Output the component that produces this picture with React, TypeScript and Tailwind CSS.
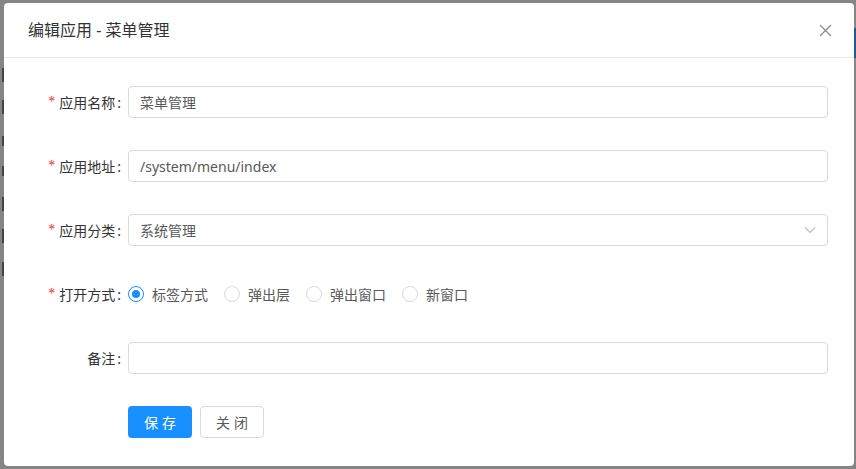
import React, { useState } from 'react';

const font = { fontFamily: '"Noto Sans", "Noto Sans CJK SC", sans-serif' };

const Label = ({ text, required = true }: { text: string; required?: boolean }) => (
  <div className="w-[117px] shrink-0 flex items-center justify-end text-[14px] text-[#333]">
    {required && <span className="text-[#f5222d] mr-[4px] text-[14px] leading-none font-['Liberation_Serif']">*</span>}
    <span>{text}</span>
    <span className="ml-[2px]">:</span>
  </div>
);

const App: React.FC = () => {
  const [openType, setOpenType] = useState('tab');

  const options = [
    { key: 'tab', label: '标签方式' },
    { key: 'layer', label: '弹出层' },
    { key: 'popup', label: '弹出窗口' },
    { key: 'new', label: '新窗口' },
  ];

  return (
    <div className="w-[856px] h-[469px] bg-[#858585] relative overflow-hidden" style={font}>
      {/* page behind the mask */}
      <div className="absolute right-0 top-[28px] w-[2px] h-[30px] bg-[#1f5a96]" />
      <div className="absolute left-[2px] top-[68px] w-[2px] h-[14px] bg-[#444]" />
      <div className="absolute left-[2px] top-[100px] w-[2px] h-[14px] bg-[#444]" />
      <div className="absolute left-[2px] top-[136px] w-[2px] h-[10px] bg-[#444]" />
      <div className="absolute left-[2px] top-[166px] w-[2px] h-[10px] bg-[#444]" />
      <div className="absolute left-[2px] top-[197px] w-[2px] h-[14px] bg-[#444]" />
      <div className="absolute left-[2px] top-[229px] w-[2px] h-[14px] bg-[#444]" />
      <div className="absolute left-[2px] top-[262px] w-[2px] h-[14px] bg-[#444]" />

      <div className="absolute left-[4px] top-[3px] w-[850px] h-[463px] bg-white rounded-[4px] flex flex-col">
        {/* header */}
        <div className="h-[55px] shrink-0 border-b border-[#e8e8e8] flex items-center justify-between pl-[24px] pr-[22px]">
          <span className="text-[16px] text-[#333] leading-none">编辑应用 - 菜单管理</span>
          <svg width="13" height="13" viewBox="0 0 13 13" className="text-[#8c8c8c]">
            <path d="M1 1 L12 12 M12 1 L1 12" stroke="currentColor" strokeWidth="1.3" fill="none" />
          </svg>
        </div>

        {/* body */}
        <div className="flex flex-col pt-[28px] pr-[26px] gap-[32px]">
          <div className="flex items-center gap-[7px]">
            <Label text="应用名称" />
            <div className="flex-1 h-[32px] border border-[#d9d9d9] rounded-[4px] flex items-center px-[11px] text-[14px] text-[#595959]">
              菜单管理
            </div>
          </div>

          <div className="flex items-center gap-[7px]">
            <Label text="应用地址" />
            <div className="flex-1 h-[32px] border border-[#d9d9d9] rounded-[4px] flex items-center px-[11px] text-[14px] text-[#595959]">
              /system/menu/index
            </div>
          </div>

          <div className="flex items-center gap-[7px]">
            <Label text="应用分类" />
            <div className="flex-1 h-[32px] border border-[#d9d9d9] rounded-[4px] flex items-center justify-between pl-[11px] pr-[11px] text-[14px] text-[#595959]">
              <span>系统管理</span>
              <svg width="12" height="8" viewBox="0 0 12 8" className="text-[#bfbfbf]">
                <path d="M1 1.5 L6 6.5 L11 1.5" stroke="currentColor" strokeWidth="1.1" fill="none" />
              </svg>
            </div>
          </div>

          <div className="flex items-center gap-[7px] h-[32px]">
            <Label text="打开方式" />
            <div className="flex items-center">
              {options.map((o) => {
                const checked = openType === o.key;
                return (
                  <button
                    key={o.key}
                    onClick={() => setOpenType(o.key)}
                    className="flex items-center mr-[16px] text-[14px] text-[#595959]"
                  >
                    <span
                      className={`w-[16px] h-[16px] rounded-full border flex items-center justify-center ${
                        checked ? 'border-[#1890ff]' : 'border-[#d9d9d9]'
                      }`}
                    >
                      {checked && <span className="w-[8px] h-[8px] rounded-full bg-[#1890ff]" />}
                    </span>
                    <span className="ml-[8px]">{o.label}</span>
                  </button>
                );
              })}
            </div>
          </div>

          <div className="flex items-center gap-[7px]">
            <Label text="备注" required={false} />
            <div className="flex-1 h-[32px] border border-[#d9d9d9] rounded-[4px]" />
          </div>

          <div className="flex items-center gap-[8px] pl-[124px]">
            <button className="h-[32px] w-[64px] rounded-[4px] bg-[#1890ff] text-white text-[14px] tracking-[4px] pl-[4px]">
              保存
            </button>
            <button className="h-[32px] w-[64px] rounded-[4px] border border-[#d9d9d9] bg-white text-[#595959] text-[14px] tracking-[4px] pl-[4px]">
              关闭
            </button>
          </div>
        </div>
      </div>
    </div>
  );
};

export default App;
